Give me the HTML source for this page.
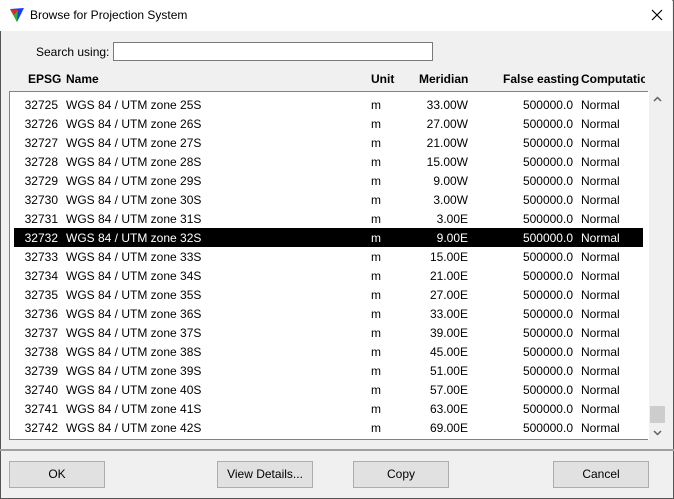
<!DOCTYPE html>
<html><head><meta charset="utf-8"><style>
*{margin:0;padding:0;box-sizing:border-box}
body{width:674px;height:499px;overflow:hidden;background:#f0f0f0;font-family:"Liberation Sans",sans-serif;font-size:12px;color:#000;position:relative}
.win{position:absolute;left:0;top:0;width:674px;height:499px;border:1px solid #555;border-top-color:#888}
.title{position:absolute;left:0;top:0;width:672px;height:31px;background:#fff}
.title span{position:absolute;left:30px;top:8px;font-size:12px}
.abs{position:absolute;white-space:nowrap}
.list{position:absolute;left:9px;top:91px;width:639px;height:349px;background:#fff;border:1px solid #828282;border-right:none}
.sb{position:absolute;left:648px;top:91px;width:17px;height:349px;background:#f0f0f0;border-left:1px solid #fff}
.row{position:absolute;left:4px;width:629px;height:19px}
.row.sel{background:#000;color:#fff}
.row div{position:absolute;top:3px;white-space:nowrap}
.btn{position:absolute;top:461px;height:27px;width:96px;background:#e1e1e1;border:1px solid #adadad;text-align:center;line-height:25px}
.hd{position:absolute;top:72px;font-weight:bold;white-space:nowrap}
</style></head><body>
<div class="win"></div>
<div class="title">
<svg style="position:absolute;left:9px;top:7px" width="16" height="16" viewBox="0 0 16 16"><polygon points="1,2 15,1 8,15" fill="#1a3cf0"/><polygon points="1,2 9,3 8,15" fill="#22b830"/><polygon points="1,2 9,3 5,8" fill="#e8202a"/></svg>
<span>Browse for Projection System</span>
<svg style="position:absolute;left:651px;top:9px" width="12" height="12" viewBox="0 0 12 12"><path d="M1 1L11 11M11 1L1 11" stroke="#000" stroke-width="1.2"/></svg>
</div>
<div class="abs" style="left:36px;top:45px">Search using:</div>
<div class="abs" style="left:113px;top:42px;width:320px;height:19px;background:#fff;border:1px solid #7a7a7a"></div>
<div class="hd" style="left:28px">EPSG</div>
<div class="hd" style="left:66px">Name</div>
<div class="hd" style="left:371px">Unit</div>
<div class="hd" style="left:419px">Meridian</div>
<div class="hd" style="left:503px">False easting</div>
<div class="hd" style="left:581px;width:64px;overflow:hidden">Computation</div>
<div class="list" id="list"></div>
<div class="sb">
<svg style="position:absolute;left:4px;top:5px" width="9" height="6" viewBox="0 0 9 6"><path d="M1 5L4.5 1.5L8 5" stroke="#606060" stroke-width="1.5" fill="none"/></svg>
<div style="position:absolute;left:1px;top:315px;width:15px;height:17px;background:#cdcdcd"></div>
<svg style="position:absolute;left:4px;top:339px" width="9" height="6" viewBox="0 0 9 6"><path d="M1 1L4.5 4.5L8 1" stroke="#606060" stroke-width="1.5" fill="none"/></svg>
</div>
<div class="abs" style="left:0;top:449px;width:674px;height:2px;background:#a0a0a0"></div>
<div class="btn" style="left:9px">OK</div>
<div class="btn" style="left:217px">View Details...</div>
<div class="btn" style="left:353px">Copy</div>
<div class="btn" style="left:553px">Cancel</div>
<script>
var mer=["33.00W","27.00W","21.00W","15.00W","9.00W","3.00W","3.00E","9.00E","15.00E","21.00E","27.00E","33.00E","39.00E","45.00E","51.00E","57.00E","63.00E","69.00E"];
var h="";
for(var i=0;i<18;i++){
h+='<div class="row'+(i==7?' sel':'')+'" style="top:'+(3+i*19)+'px">'+
'<div style="right:585px">'+(32725+i)+'</div>'+
'<div style="left:52px">WGS 84 / UTM zone '+(25+i)+'S</div>'+
'<div style="left:357px">m</div>'+
'<div style="right:175px">'+mer[i]+'</div>'+
'<div style="right:70px">500000.0</div>'+
'<div style="left:567px">Normal</div></div>';
}
document.getElementById("list").innerHTML=h;
</script>
</body></html>
